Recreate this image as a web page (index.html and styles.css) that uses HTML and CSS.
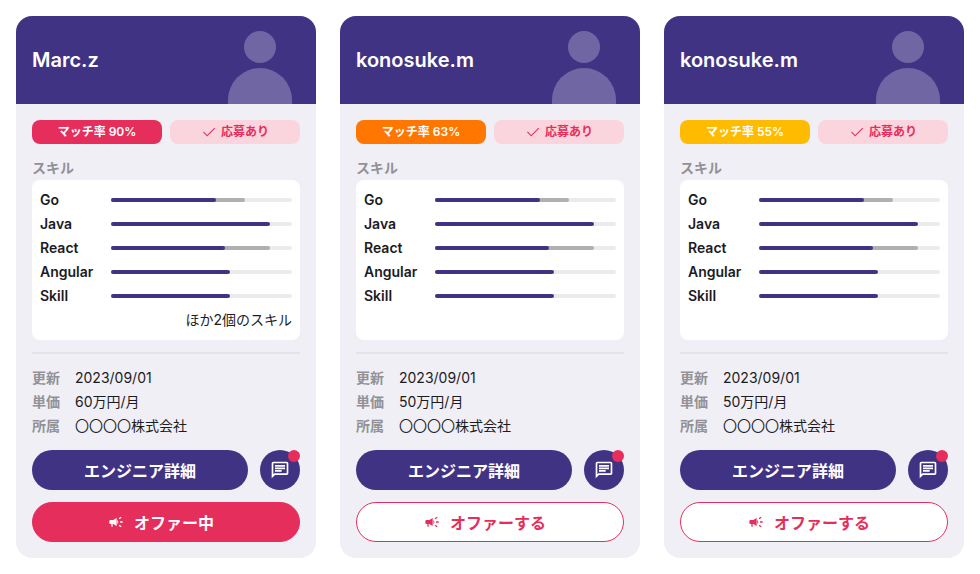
FILE: index.html
```html
<!DOCTYPE html>
<html lang="ja">
  <head>
    <meta charset="UTF-8" />
    <meta name="viewport" content="width=device-width, initial-scale=1.0" />
    <title>エンジニア一覧</title>
    <link rel="stylesheet" href="styles.css">
  </head>
  <body>
    <!-- Shared icons -->
    <svg class="icon-sprite" aria-hidden="true">
      <symbol id="icon-check" viewBox="0 0 24 24">
        <path d="M9.2 18.6 3 12.4 4.1 11.3 9.2 16.4 20.1 5.5 21.2 6.6z" />
      </symbol>
      <symbol id="icon-chat" viewBox="0 0 24 24">
        <path d="M4 4h16v12H5.17L4 17.17V4m0-2c-1.1 0-1.99.9-1.99 2L2 22l4-4h14c1.1 0 2-.9 2-2V4c0-1.1-.9-2-2-2H4zm2 10h8v2H6v-2zm0-3h12v2H6V9zm0-3h12v2H6V6z" />
      </symbol>
      <symbol id="icon-campaign" viewBox="0 0 24 24">
        <path d="M18 11v2h4v-2h-4zM16 17.61c.96.71 2.21 1.65 3.2 2.39.4-.53.8-1.07 1.2-1.6-.99-.74-2.24-1.68-3.2-2.4-.4.54-.8 1.08-1.2 1.61zM20.4 5.6c-.4-.53-.8-1.07-1.2-1.6-.99.74-2.24 1.68-3.2 2.4.4.53.8 1.07 1.2 1.6.96-.72 2.21-1.65 3.2-2.4zM4 9c-1.1 0-2 .9-2 2v2c0 1.1.9 2 2 2h1v4h2v-4h1l5 3V6L8 9H4zM15.5 12c0-1.33-.58-2.53-1.5-3.35v6.69c.92-.81 1.5-2.01 1.5-3.34z" />
      </symbol>
      <symbol id="icon-person" viewBox="0 0 64 73">
        <circle cx="32" cy="16" r="16" />
        <path d="M0 73V69a32 32 0 0 1 64 0v4z" />
      </symbol>
    </svg>

    <main class="card-list">
      <!-- Marc.z -->
      <article class="card">
        <header class="card-header">
          <h2>Marc.z</h2>
          <svg class="avatar" aria-hidden="true"><use href="#icon-person" /></svg>
        </header>
        <div class="card-body">
          <div class="badges">
            <span class="badge badge-high">マッチ率 90%</span>
            <span class="badge badge-applied"><svg class="icon" aria-hidden="true"><use href="#icon-check" /></svg>応募あり</span>
          </div>
          <h3>スキル</h3>
          <div class="skills">
            <ul>
              <li><span class="skill-name">Go</span><span class="bar"><span class="bar-sub" style="width: 74%"></span><span class="bar-main" style="width: 58%"></span></span></li>
              <li><span class="skill-name">Java</span><span class="bar"><span class="bar-main" style="width: 88%"></span></span></li>
              <li><span class="skill-name">React</span><span class="bar"><span class="bar-sub" style="width: 88%"></span><span class="bar-main" style="width: 63%"></span></span></li>
              <li><span class="skill-name">Angular</span><span class="bar"><span class="bar-main" style="width: 66%"></span></span></li>
              <li><span class="skill-name">Skill</span><span class="bar"><span class="bar-main" style="width: 66%"></span></span></li>
            </ul>
            <p class="skills-more">ほか2個のスキル</p>
          </div>
          <dl class="info">
            <dt>更新</dt><dd>2023/09/01</dd>
            <dt>単価</dt><dd>60万円/月</dd>
            <dt>所属</dt><dd>〇〇〇〇株式会社</dd>
          </dl>
          <div class="actions">
            <button class="button button-detail" type="button">エンジニア詳細</button>
            <button class="button button-chat" type="button" aria-label="メッセージ"><svg class="icon icon-large" aria-hidden="true"><use href="#icon-chat" /></svg></button>
          </div>
          <button class="button button-offer offered" type="button"><svg class="icon" aria-hidden="true"><use href="#icon-campaign" /></svg><span>オファー中</span></button>
        </div>
      </article>

      <!-- konosuke.m, 63% -->
      <article class="card">
        <header class="card-header">
          <h2>konosuke.m</h2>
          <svg class="avatar" aria-hidden="true"><use href="#icon-person" /></svg>
        </header>
        <div class="card-body">
          <div class="badges">
            <span class="badge badge-middle">マッチ率 63%</span>
            <span class="badge badge-applied"><svg class="icon" aria-hidden="true"><use href="#icon-check" /></svg>応募あり</span>
          </div>
          <h3>スキル</h3>
          <div class="skills">
            <ul>
              <li><span class="skill-name">Go</span><span class="bar"><span class="bar-sub" style="width: 74%"></span><span class="bar-main" style="width: 58%"></span></span></li>
              <li><span class="skill-name">Java</span><span class="bar"><span class="bar-main" style="width: 88%"></span></span></li>
              <li><span class="skill-name">React</span><span class="bar"><span class="bar-sub" style="width: 88%"></span><span class="bar-main" style="width: 63%"></span></span></li>
              <li><span class="skill-name">Angular</span><span class="bar"><span class="bar-main" style="width: 66%"></span></span></li>
              <li><span class="skill-name">Skill</span><span class="bar"><span class="bar-main" style="width: 66%"></span></span></li>
            </ul>
            <p class="skills-more"></p>
          </div>
          <dl class="info">
            <dt>更新</dt><dd>2023/09/01</dd>
            <dt>単価</dt><dd>50万円/月</dd>
            <dt>所属</dt><dd>〇〇〇〇株式会社</dd>
          </dl>
          <div class="actions">
            <button class="button button-detail" type="button">エンジニア詳細</button>
            <button class="button button-chat" type="button" aria-label="メッセージ"><svg class="icon icon-large" aria-hidden="true"><use href="#icon-chat" /></svg></button>
          </div>
          <button class="button button-offer" type="button"><svg class="icon" aria-hidden="true"><use href="#icon-campaign" /></svg><span>オファーする</span></button>
        </div>
      </article>

      <!-- konosuke.m, 55% -->
      <article class="card">
        <header class="card-header">
          <h2>konosuke.m</h2>
          <svg class="avatar" aria-hidden="true"><use href="#icon-person" /></svg>
        </header>
        <div class="card-body">
          <div class="badges">
            <span class="badge badge-low">マッチ率 55%</span>
            <span class="badge badge-applied"><svg class="icon" aria-hidden="true"><use href="#icon-check" /></svg>応募あり</span>
          </div>
          <h3>スキル</h3>
          <div class="skills">
            <ul>
              <li><span class="skill-name">Go</span><span class="bar"><span class="bar-sub" style="width: 74%"></span><span class="bar-main" style="width: 58%"></span></span></li>
              <li><span class="skill-name">Java</span><span class="bar"><span class="bar-main" style="width: 88%"></span></span></li>
              <li><span class="skill-name">React</span><span class="bar"><span class="bar-sub" style="width: 88%"></span><span class="bar-main" style="width: 63%"></span></span></li>
              <li><span class="skill-name">Angular</span><span class="bar"><span class="bar-main" style="width: 66%"></span></span></li>
              <li><span class="skill-name">Skill</span><span class="bar"><span class="bar-main" style="width: 66%"></span></span></li>
            </ul>
            <p class="skills-more"></p>
          </div>
          <dl class="info">
            <dt>更新</dt><dd>2023/09/01</dd>
            <dt>単価</dt><dd>50万円/月</dd>
            <dt>所属</dt><dd>〇〇〇〇株式会社</dd>
          </dl>
          <div class="actions">
            <button class="button button-detail" type="button">エンジニア詳細</button>
            <button class="button button-chat" type="button" aria-label="メッセージ"><svg class="icon icon-large" aria-hidden="true"><use href="#icon-chat" /></svg></button>
          </div>
          <button class="button button-offer" type="button"><svg class="icon" aria-hidden="true"><use href="#icon-campaign" /></svg><span>オファーする</span></button>
        </div>
      </article>
    </main>
  </body>
</html>
```

FILE: styles.css
```css
* {
  box-sizing: border-box;
  margin: 0;
  padding: 0;
}
body {
  padding: 16px;
  background: #fff;
  color: #1c1b1f;
  font-family: "Inter", "Noto Sans CJK JP", sans-serif;
  font-size: 14px;
  line-height: 24px;
}
.icon-sprite {
  display: none;
}
.icon {
  width: 16px;
  height: 16px;
  flex-shrink: 0;
  fill: currentColor;
}
.icon-large {
  width: 20px;
  height: 20px;
}
.card-list {
  display: grid;
  grid-template-columns: repeat(auto-fit, minmax(280px, 1fr));
  gap: 24px;
}
.card {
  background: #f0eff5;
  border-radius: 16px;
  overflow: hidden;
}
.card-header {
  display: flex;
  justify-content: space-between;
  align-items: center;
  padding: 15px 24px 0 16px;
  background: #413384;
  color: #fff;
}
.card-header h2 {
  padding-bottom: 15px;
  font-size: 20px;
  font-weight: 600;
}
.avatar {
  width: 64px;
  height: 73px;
  fill: rgba(255, 255, 255, 0.25);
}
.card-body {
  padding: 16px;
}

/* Badges */
.badges {
  display: grid;
  grid-template-columns: 1fr 1fr;
  gap: 8px;
  margin-bottom: 12px;
}
.badge {
  display: flex;
  justify-content: center;
  align-items: center;
  gap: 4px;
  border-radius: 8px;
  color: #fff;
  font-size: 12px;
  font-weight: 600;
}
.badge-high {
  background: #e62e5c;
}
.badge-middle {
  background: #ff7700;
}
.badge-low {
  background: #ffbb00;
}
.badge-applied {
  background: #fad5de;
  color: #e62e5c;
}

/* Skills */
h3 {
  color: #929196;
  font-size: 14px;
  font-weight: 600;
}
.skills {
  padding: 8px;
  border-radius: 8px;
  background: #fff;
}
.skills ul {
  list-style: none;
}
.skills li {
  display: flex;
  align-items: center;
}
.skill-name {
  width: 71px;
  font-weight: 600;
}
.bar {
  display: grid;
  flex: 1;
  height: 4px;
  border-radius: 2px;
  background: #ebebeb;
}
.bar-main,
.bar-sub {
  grid-area: 1 / 1;
  border-radius: 2px;
}
.bar-main {
  background: #413384;
}
.bar-sub {
  background: #b0b0b3;
}
.skills-more {
  min-height: 24px;
  text-align: right;
}

/* Info */
.info {
  display: grid;
  grid-template-columns: auto 1fr;
  column-gap: 15px;
  margin: 12px 0;
  padding-top: 12px;
  border-top: 2px solid #e4e3ea;
}
.info dt {
  color: #929196;
  font-weight: 600;
}

/* Buttons */
.actions {
  display: flex;
  gap: 12px;
  margin-bottom: 12px;
}
.button {
  display: flex;
  justify-content: center;
  align-items: center;
  height: 40px;
  border: none;
  border-radius: 20px;
  background: #413384;
  color: #fff;
  font-family: "Noto Sans CJK JP", sans-serif;
  font-size: 16px;
  font-weight: 700;
  line-height: 24px;
  cursor: pointer;
}
.button-detail {
  flex: 1;
}
.button-chat {
  position: relative;
  width: 40px;
}
.button-chat::after {
  content: "";
  position: absolute;
  top: 0;
  right: 0;
  width: 12px;
  height: 12px;
  border-radius: 50%;
  background: #e62e5c;
}
.button-offer {
  width: 100%;
  border: 1px solid #e62e5c;
  background: #fff;
  color: #e62e5c;
}
.button-offer span {
  margin: 0 10px;
}
.offered {
  background: #e62e5c;
  color: #fff;
}
```
